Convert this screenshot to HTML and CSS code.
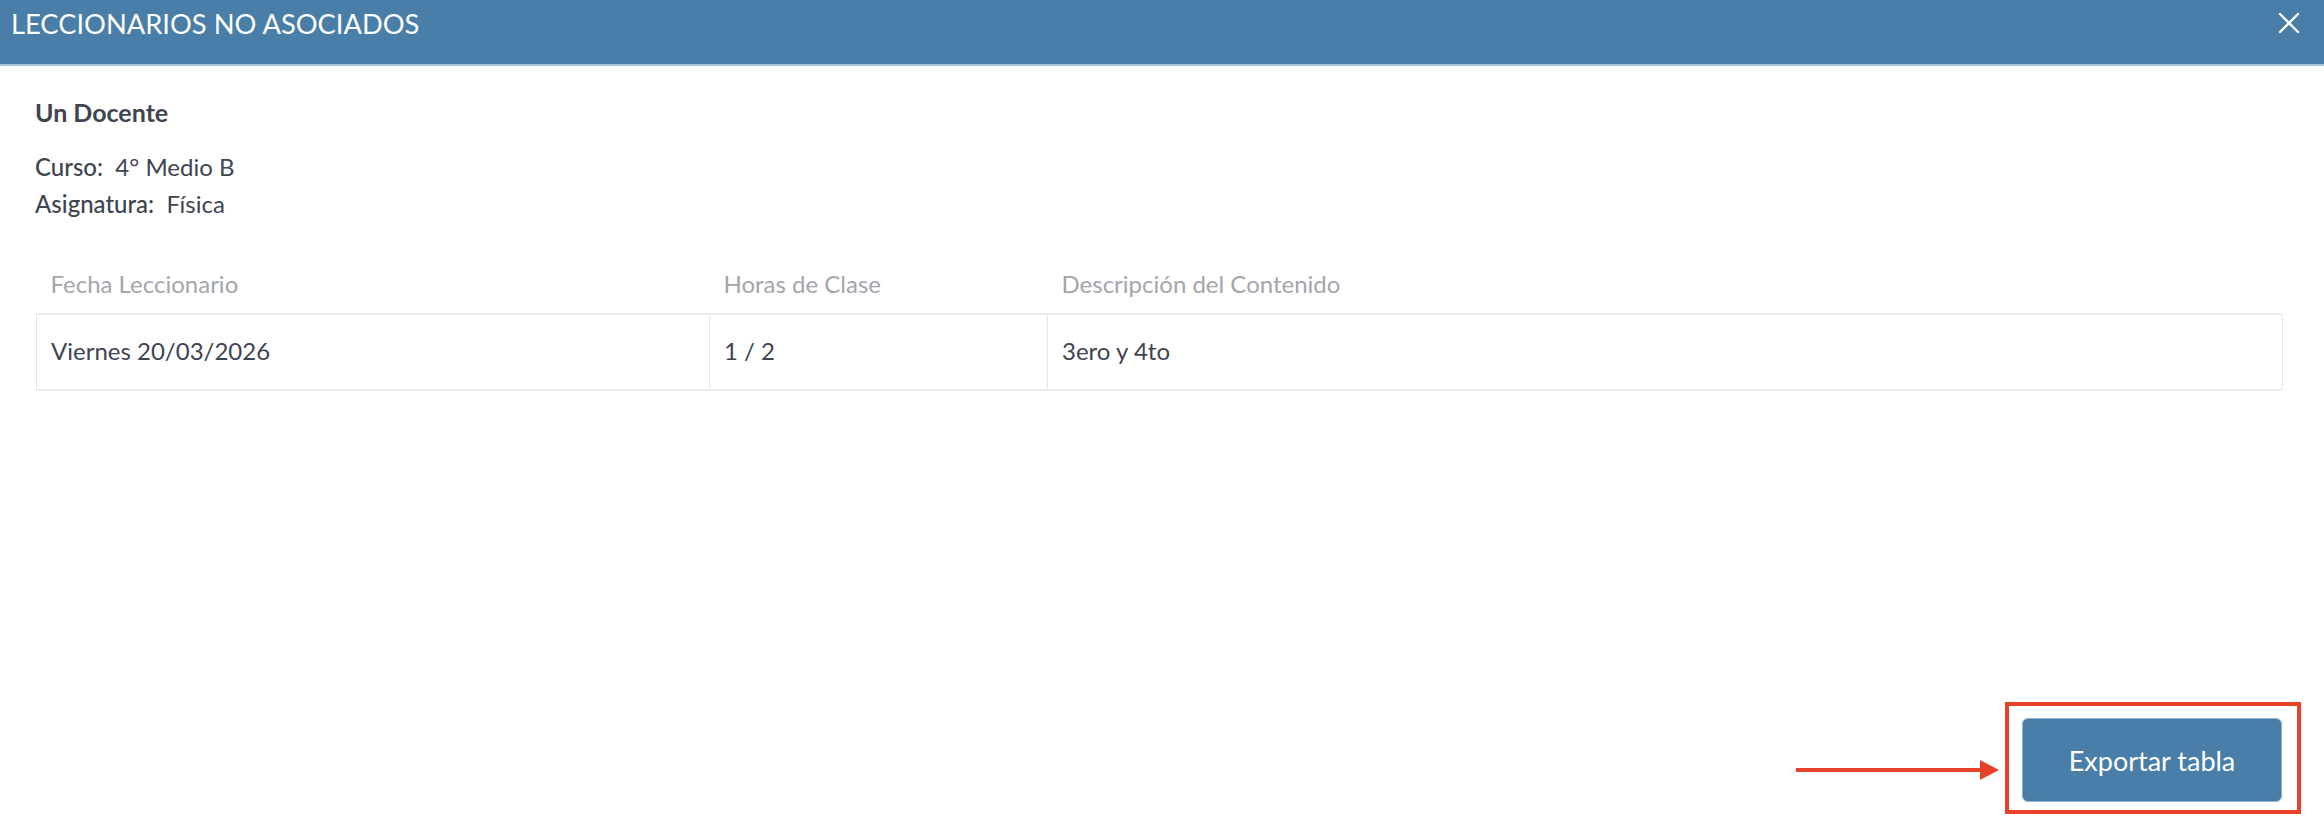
FILE: index.html
```html
<!DOCTYPE html>
<html lang="es">
<head>
  <meta charset="UTF-8">
  <meta name="viewport" content="width=device-width, initial-scale=1.0">
  <title>Leccionarios no asociados</title>
  <link rel="stylesheet" href="styles.css">
</head>
<body>
  <div class="modal">
    <div class="modal-header">
      <h1>LECCIONARIOS NO ASOCIADOS</h1>
      <button class="close-btn" aria-label="Cerrar">
        <svg width="22" height="22" viewBox="0 0 22 22">
          <path d="M2 2 L20 20 M20 2 L2 20" stroke="#fff" stroke-width="2.4" stroke-linecap="round" fill="none"/>
        </svg>
      </button>
    </div>

    <div class="modal-body">
      <p class="teacher">Un Docente</p>
      <div class="info">
        <p><span class="label">Curso:</span>&nbsp; 4° Medio B</p>
        <p><span class="label">Asignatura:</span>&nbsp; Física</p>
      </div>

      <table class="lessons">
        <thead>
          <tr>
            <th class="col-date">Fecha Leccionario</th>
            <th class="col-hours">Horas de Clase</th>
            <th>Descripción del Contenido</th>
          </tr>
        </thead>
        <tbody>
          <tr>
            <td>Viernes 20/03/2026</td>
            <td>1 / 2</td>
            <td>3ero y 4to</td>
          </tr>
        </tbody>
      </table>
    </div>

    <div class="modal-footer">
      <svg class="pointer" width="204" height="20" viewBox="0 0 204 20">
        <rect x="0" y="8" width="186" height="4" fill="#e8412a"/>
        <polygon points="184,0 203,10 184,20" fill="#e8412a"/>
      </svg>
      <div class="highlight">
        <button class="export-btn">Exportar tabla</button>
      </div>
    </div>
  </div>
</body>
</html>
```

FILE: styles.css
```css
* {
  box-sizing: border-box;
}

body {
  margin: 0;
  font-family: 'Lato', 'Noto Sans', sans-serif;
  color: #3e4450;
  background: #fff;
}

.modal {
  height: 100vh;
  display: flex;
  flex-direction: column;
}

.modal-header {
  height: 66px;
  background: #487ea8;
  border-bottom: 2px solid #a6c6dc;
  display: flex;
  align-items: flex-start;
  justify-content: space-between;
  padding: 0 24px 0 11px;
}

.modal-header h1 {
  margin: 0;
  padding-top: 6px;
  font-size: 27.3px;
  line-height: 36px;
  font-weight: 400;
  color: #fff;
}

.close-btn {
  margin-top: 12px;
  padding: 0;
  border: 0;
  background: none;
  cursor: pointer;
  line-height: 0;
}

.modal-body {
  flex: 1;
  padding: 32px 42px 0 35px;
}

.teacher {
  margin: 0;
  font-size: 25px;
  line-height: 28px;
  font-weight: 700;
}

.info {
  margin-top: 22px;
}

.info p {
  margin: 0;
  font-size: 24px;
  line-height: 37px;
}

.label {
  font-weight: 500;
}

.lessons {
  width: 100%;
  margin-top: 31px;
  margin-left: 1px;
  border-collapse: collapse;
  font-size: 24px;
  line-height: 30px;
}

.lessons th {
  text-align: left;
  font-weight: 400;
  color: #a3a6ac;
  padding: 16px 14px 14px;
}

.col-date {
  width: 673px;
}

.col-hours {
  width: 338px;
}

.lessons td {
  padding: 21px 14px 23px;
  border-top: 2px solid #eeeeee;
  border-bottom: 2px solid #eeeeee;
  border-left: 1px solid #e6e6e6;
  border-right: 1px solid #e6e6e6;
}

.modal-footer {
  display: flex;
  justify-content: flex-end;
  align-items: flex-end;
  padding: 0 23px 12px 0;
}

.pointer {
  margin: 0 5px 34px 0;
}

.highlight {
  border: 4px solid #e8412a;
  padding: 12px 15px 8px 13px;
}

.export-btn {
  width: 260px;
  height: 84px;
  background: #487ea8;
  border: 1px solid #8cb0cb;
  border-radius: 6px;
  color: #fff;
  font-family: 'Lato', 'Noto Sans', sans-serif;
  font-size: 27px;
  display: block;
  cursor: pointer;
}
```
